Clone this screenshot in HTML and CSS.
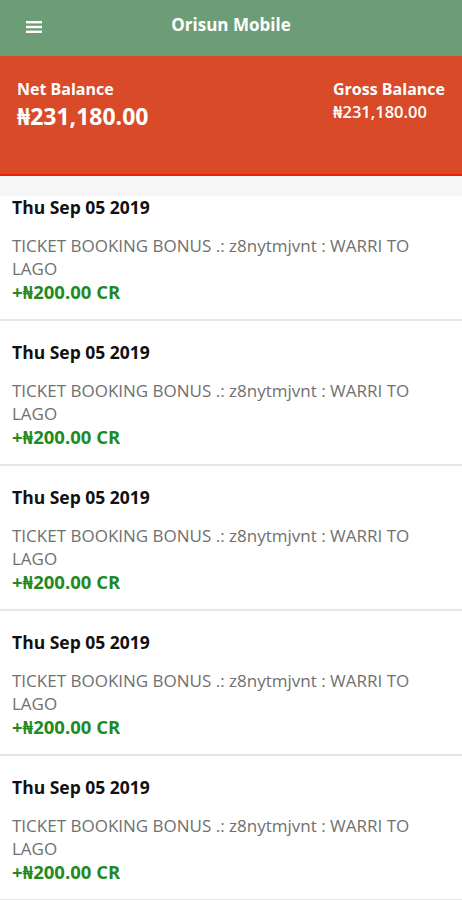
FILE: index.html
```html
<!DOCTYPE html>
<html>
<head>
<meta charset="utf-8">
<link rel="stylesheet" href="styles.css">
</head>
<body>
<div class="app">
  <header class="topbar">
    <svg class="menu" width="16" height="14" viewBox="0 0 16 14"><rect x="0" y="1" width="16" height="2.4" fill="#fff"/><rect x="0" y="5.8" width="16" height="2.4" fill="#fff"/><rect x="0" y="10.6" width="16" height="2.4" fill="#fff"/></svg>
    <div class="title">Orisun Mobile</div>
  </header>
  <section class="balances">
    <div class="bal">
      <div class="bal-label">Net Balance</div>
      <div class="bal-big">₦231,180.00</div>
    </div>
    <div class="bal">
      <div class="bal-label">Gross Balance</div>
      <div class="bal-small">₦231,180.00</div>
    </div>
  </section>
  <div class="list">
    <div class="strip"></div>
    <div class="item">
      <div class="date">Thu Sep 05 2019</div>
      <div class="desc">TICKET BOOKING BONUS .: z8nytmjvnt : WARRI TO LAGO</div>
      <div class="amt">+₦200.00 CR</div>
    </div>
    <div class="item">
      <div class="date">Thu Sep 05 2019</div>
      <div class="desc">TICKET BOOKING BONUS .: z8nytmjvnt : WARRI TO LAGO</div>
      <div class="amt">+₦200.00 CR</div>
    </div>
    <div class="item">
      <div class="date">Thu Sep 05 2019</div>
      <div class="desc">TICKET BOOKING BONUS .: z8nytmjvnt : WARRI TO LAGO</div>
      <div class="amt">+₦200.00 CR</div>
    </div>
    <div class="item">
      <div class="date">Thu Sep 05 2019</div>
      <div class="desc">TICKET BOOKING BONUS .: z8nytmjvnt : WARRI TO LAGO</div>
      <div class="amt">+₦200.00 CR</div>
    </div>
    <div class="item">
      <div class="date">Thu Sep 05 2019</div>
      <div class="desc">TICKET BOOKING BONUS .: z8nytmjvnt : WARRI TO LAGO</div>
      <div class="amt">+₦200.00 CR</div>
    </div>
  </div>
</div>
</body>
</html>
```
FILE: styles.css
```css
* { box-sizing: border-box; }
html, body { margin: 0; padding: 0; background: #fff; }
body { font-family: "Open Sans", "Noto Sans", sans-serif; overflow: hidden; }
.app { width: 462px; height: 900px; overflow: hidden; }
.topbar {
  height: 56px;
  background: #6d9d77;
  display: flex;
  align-items: center;
  padding-left: 26px;
}
.menu { display: block; margin-top: -2px; }
.title {
  flex: 1;
  text-align: center;
  color: #fff;
  font-weight: 700;
  font-size: 17px;
  margin-left: -42px;
  margin-top: -8px;
}
.balances {
  height: 120px;
  background: #d94b28;
  border-bottom: 2px solid #f21e08;
  display: flex;
  justify-content: space-between;
  padding: 22px 17px 0 17px;
  color: #fff;
}
.bal-label { font-weight: 700; font-size: 16px; line-height: 22px; }
.bal-big { font-weight: 700; font-size: 23px; line-height: 32px; }
.bal-small { font-weight: 600; font-size: 16.5px; line-height: 24px; }
.list { position: relative; }
.strip {
  position: absolute;
  left: 0; top: 0; right: 0;
  height: 20px;
  background: #f6f6f6;
}
.item {
  height: 145px;
  border-bottom: 2px solid #e6e6e6;
  padding: 19px 12px 0 12px;
}
.date { font-weight: 700; font-size: 17.5px; line-height: 24px; color: #111; margin-bottom: 15px; }
.desc { font-size: 17px; line-height: 23px; color: #707070; }
.amt { font-weight: 700; font-size: 18.5px; line-height: 23px; color: #1f8a22; }
```
